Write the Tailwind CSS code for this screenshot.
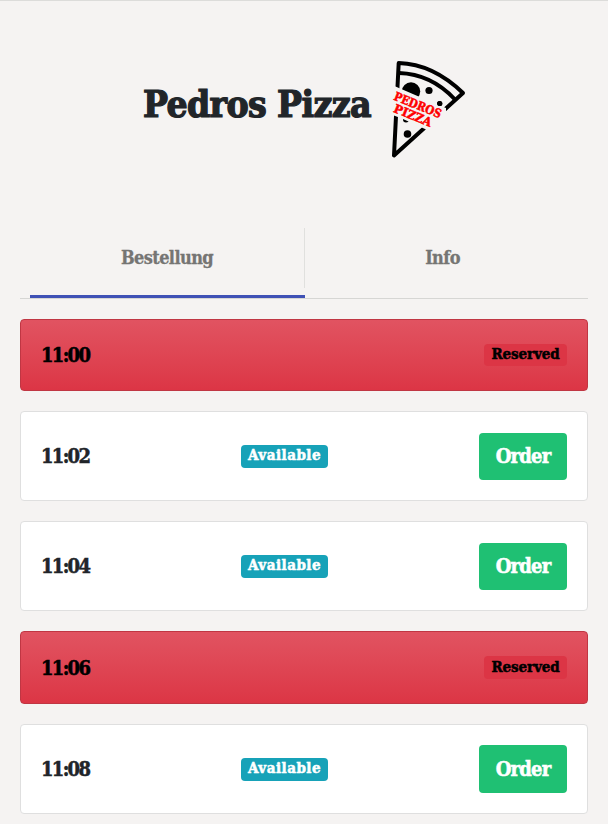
<!DOCTYPE html>
<html lang="de">
<head>
<meta charset="utf-8">
<title>Pedros Pizza</title>
<script src="https://cdn.jsdelivr.net/npm/@tailwindcss/browser@4"></script>
</head>
<body class="h-[824px] overflow-hidden border-t border-[#dcdcda] bg-[#f5f3f2] px-5 font-['DejaVu_Serif_Condensed','DejaVu_Serif',serif] font-bold text-[#212529]">
<header class="flex h-[227px] items-start pt-[49px] pl-[123px]">
  <h1 class="mt-[30px] w-[237px] text-[37px] leading-[48px] tracking-[-0.65px] whitespace-nowrap [-webkit-text-stroke:1.2px_currentColor]">Pedros Pizza</h1>
  <svg class="h-[120px] w-[100px] shrink-0" viewBox="0 0 100 120">
    <path d="M18.700 13Q53 14 83 43L14 105.500Z" fill="none" stroke="#000" stroke-width="4" stroke-linejoin="round"/>
    <path d="M19 23Q51 24 74.500 49" fill="none" stroke="#000" stroke-width="4"/>
    <circle cx="31" cy="41.500" r="9.200"/>
    <circle cx="49" cy="40.500" r="3.600"/>
    <circle cx="59.700" cy="53.500" r="2.600"/>
    <circle cx="26" cy="69.500" r="3"/>
    <circle cx="27.500" cy="84" r="3.800"/>
    <path d="M12 35L56 54L66 58L66 65L50 82L45 79L23 69L10 64Z" fill="#f5f3f2"/>
    <circle cx="59.700" cy="53.500" r="2.600"/>
    <g fill="#f00" stroke="#f00" stroke-width=".5" font-size="12" transform="translate(13 49.500) rotate(22)">
      <text x="0" y="0" textLength="50" lengthAdjust="spacingAndGlyphs">PEDROS</text>
      <text x="4.500" y="11.500" textLength="40" lengthAdjust="spacingAndGlyphs">PIZZA</text>
    </g>
  </svg>
</header>
<nav class="mb-5 flex h-[71px] border-b border-[#d6d6d4] pl-[10px] text-[18px] tracking-[-0.6px] text-[#757573] [-webkit-text-stroke:0.3px_currentColor]">
  <div class="flex w-[275px] flex-col border-b-[3px] border-[#3f51b5]"><div class="flex h-[60px] items-center justify-center border-r border-[#e0e0de] pb-px">Bestellung</div></div>
  <div class="flex h-[60px] w-[275px] items-center justify-center pb-px">Info</div>
</nav>
<main class="flex flex-col gap-5 text-[20px] [-webkit-text-stroke:0.5px_currentColor]">
  <div class="flex h-[72px] items-center justify-between rounded-[4px] border border-[#c03643] bg-linear-to-b from-[#e15361] to-[#dc3545] px-5 text-black"><span class="tracking-[-1.700px]">11:00</span><span class="flex h-[22px] w-[83px] items-center justify-center rounded-[4px] bg-[#dc3545] pb-px text-[15px] tracking-[-0.1px]">Reserved</span></div>
  <div class="flex h-[90px] items-center rounded-[4px] border border-[#dfdfdf] bg-white px-5"><span class="w-[200px] tracking-[-1.700px]">11:02</span><span class="flex h-[23px] w-[87px] items-center justify-center rounded-[4px] bg-[#17a2b8] pb-px text-[15px] tracking-[0.500px] text-white">Available</span><button class="ml-auto h-[47px] w-[88px] rounded-[4px] bg-[#1fc073] tracking-[-0.8px] text-white">Order</button></div>
  <div class="flex h-[90px] items-center rounded-[4px] border border-[#dfdfdf] bg-white px-5"><span class="w-[200px] tracking-[-1.700px]">11:04</span><span class="flex h-[23px] w-[87px] items-center justify-center rounded-[4px] bg-[#17a2b8] pb-px text-[15px] tracking-[0.500px] text-white">Available</span><button class="ml-auto h-[47px] w-[88px] rounded-[4px] bg-[#1fc073] tracking-[-0.8px] text-white">Order</button></div>
  <div class="flex h-[73px] items-center justify-between rounded-[4px] border border-[#c03643] bg-linear-to-b from-[#e15361] to-[#dc3545] px-5 text-black"><span class="tracking-[-1.700px]">11:06</span><span class="flex h-[23px] w-[83px] items-center justify-center rounded-[4px] bg-[#dc3545] pb-px text-[15px] tracking-[-0.1px]">Reserved</span></div>
  <div class="flex h-[90px] items-center rounded-[4px] border border-[#dfdfdf] bg-white px-5"><span class="w-[200px] tracking-[-1.700px]">11:08</span><span class="flex h-[23px] w-[87px] items-center justify-center rounded-[4px] bg-[#17a2b8] pb-px text-[15px] tracking-[0.500px] text-white">Available</span><button class="ml-auto h-[48px] w-[88px] rounded-[4px] bg-[#1fc073] tracking-[-0.8px] text-white">Order</button></div>
</main>
</body>
</html>
